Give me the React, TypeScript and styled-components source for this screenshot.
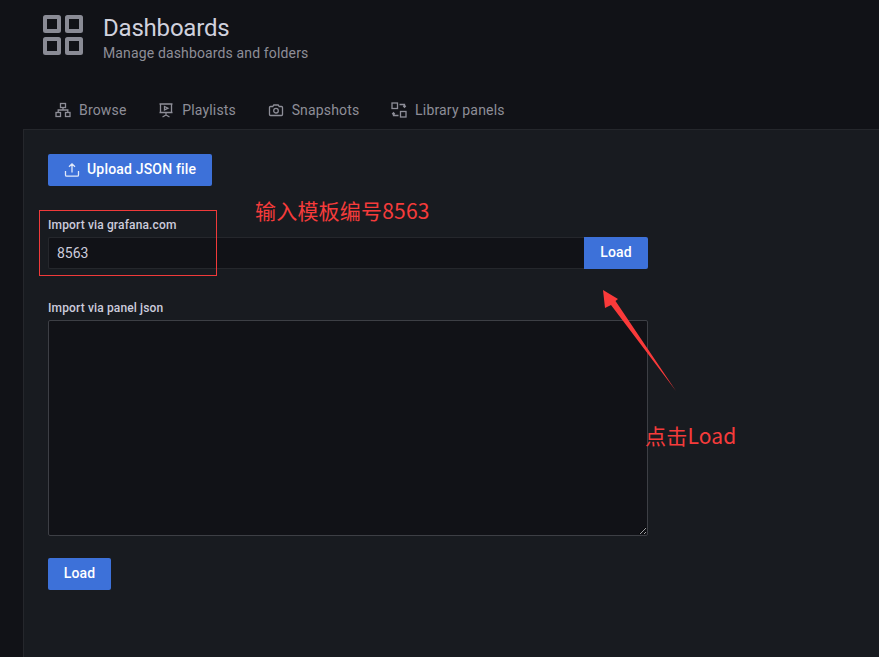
import React from "react";
import styled, { createGlobalStyle } from "styled-components";

const Global = createGlobalStyle`
  html, body { margin: 0; padding: 0; height: 100%; background: #111217; overflow: hidden; }
  #root { height: 100%; }
  * { box-sizing: border-box; }
`;

const Page = styled.div`
  position: relative;
  width: 879px;
  height: 657px;
  display: flex;
  flex-direction: column;
  background: #111217;
  font-family: Roboto, "Liberation Sans", sans-serif;
  color: #ccccdc;
  overflow: hidden;
`;
const Header = styled.header`
  height: 129px;
  padding: 14px 0 0 43px;
  display: flex;
  flex-direction: column;
  flex: none;
`;
const TitleRow = styled.div`
  display: flex;
  gap: 20px;
  height: 72px;
`;
const Logo = styled.svg`
  margin-top: 1px;
`;
const TitleText = styled.div`
  display: flex;
  flex-direction: column;
`;
const Title = styled.h1`
  margin: 0;
  font-size: 24px;
  line-height: 28px;
  font-weight: 400;
  letter-spacing: -0.2px;
  color: #d0d1dd;
`;
const Subtitle = styled.div`
  margin-top: 2px;
  font-size: 14px;
  line-height: 18px;
  letter-spacing: 0.14px;
  color: #8e8e98;
`;
const Tabs = styled.nav`
  display: flex;
  padding-left: 12px;
  gap: 31.7px;
  height: 20px;
  margin-top: 14px;
`;
const Tab = styled.div`
  display: flex;
  align-items: center;
  gap: 8px;
  font-size: 14px;
  letter-spacing: 0.17px;
  color: #8e8e98;
  line-height: 20px;
`;
const Panel = styled.main`
  flex: 1;
  margin-left: 23px;
  padding: 24px;
  background: #181b20;
  border-top: 1px solid #25272c;
  border-left: 1px solid #25272c;
`;
const Button = styled.button`
  height: 32px;
  padding: 0 16px 2px;
  display: inline-flex;
  align-items: center;
  justify-content: center;
  gap: 7px;
  background: #3d71d9;
  color: #fff;
  border: 0;
  border-radius: 2px;
  font-family: inherit;
  font-size: 14px;
  font-weight: 500;
  letter-spacing: 0.18px;
`;
const ButtonIcon = styled.svg`
  margin-top: 2px;
`;
const Label = styled.label`
  display: block;
  font-size: 12px;
  font-weight: 500;
  line-height: 14px;
  letter-spacing: 0.14px;
  color: #ccccdc;
  margin-bottom: 5px;
`;
const FieldRow = styled.div`
  display: flex;
  width: 600px;
  height: 32px;
`;
const Input = styled.input`
  flex: 1;
  min-width: 0;
  height: 32px;
  padding: 0 8px;
  background: #111217;
  border: 1px solid #25272c;
  border-right: 0;
  border-radius: 2px 0 0 2px;
  color: #ccccdc;
  font-family: inherit;
  font-size: 14px;
  outline: 0;
`;
const AttachedButton = styled(Button)`
  width: 64px;
  flex: none;
  padding: 0 0 2px;
  border-radius: 0 2px 2px 0;
`;
const SubmitButton = styled(Button)`
  width: 63px;
  padding: 0 0 2px;
`;
const Section = styled.section<{ $top: number }>`
  margin-top: ${(p) => p.$top}px;
`;
const Textarea = styled.textarea`
  display: block;
  width: 600px;
  height: 216px;
  padding: 4px 8px;
  background: #111217;
  border: 1px solid #3d3f45;
  border-radius: 2px;
  color: #ccccdc;
  outline: 0;
`;
const RedBox = styled.div`
  position: absolute;
  left: 39px;
  top: 210px;
  width: 178px;
  height: 66px;
  border: 1px solid #f03a3a;
`;
const Note = styled.div<{ $left: number; $top: number }>`
  position: absolute;
  left: ${(p) => p.$left}px;
  top: ${(p) => p.$top}px;
  color: #f53b3b;
  font-family: "Noto Sans CJK SC", "Noto Sans", sans-serif;
  font-size: 21px;
  line-height: 26px;
  letter-spacing: 0.2px;
  white-space: nowrap;
`;
const Arrow = styled.svg`
  position: absolute;
  left: 600px;
  top: 288px;
`;

const stroke = { fill: "none", stroke: "#8e8e98", strokeWidth: 1.3 };

export default function App() {
  return (
    <Page>
      <Global />
      <Header>
        <TitleRow>
          <Logo width="40" height="40" viewBox="0 0 40 40" fill="none" stroke="#8a8b95" strokeWidth="4">
            <rect x="2" y="2" width="14" height="14" rx="0.5" />
            <rect x="24" y="2" width="14" height="14" rx="0.5" />
            <rect x="2" y="24" width="14" height="14" rx="0.5" />
            <rect x="24" y="24" width="14" height="14" rx="0.5" />
          </Logo>
          <TitleText>
            <Title>Dashboards</Title>
            <Subtitle>Manage dashboards and folders</Subtitle>
          </TitleText>
        </TitleRow>
        <Tabs>
          <Tab>
            <svg width="16" height="16" viewBox="0 0 16 16" {...stroke}>
              <rect x="5.5" y="1.5" width="5" height="4" />
              <rect x="1" y="10.5" width="4.5" height="4" />
              <rect x="10.5" y="10.5" width="4.5" height="4" />
              <path d="M8 5.5V8M3.2 10.5V8h9.6v2.5" />
            </svg>
            Browse
          </Tab>
          <Tab>
            <svg width="16" height="16" viewBox="0 0 16 16" {...stroke}>
              <path d="M1.5 2h13M2.5 2v8.5h11V2M1.5 10.5h13M8 10.5V13M4.5 15L8 13l3.5 2" />
              <path d="M6.5 4.5v3.5L10 6.2z" />
            </svg>
            Playlists
          </Tab>
          <Tab>
            <svg width="16" height="16" viewBox="0 0 16 16" {...stroke}>
              <path d="M1.5 5.5a1 1 0 0 1 1-1h2.3l1-1.5h4.4l1 1.5h2.3a1 1 0 0 1 1 1v7a1 1 0 0 1-1 1h-11a1 1 0 0 1-1-1z" />
              <circle cx="8" cy="8.7" r="2.3" />
            </svg>
            Snapshots
          </Tab>
          <Tab>
            <svg width="16" height="16" viewBox="0 0 16 16" {...stroke}>
              <rect x="1" y="1" width="5.5" height="5.5" />
              <rect x="9.5" y="9.5" width="5.5" height="5.5" />
              <path d="M8.5 2.5h5V5M12.2 3.8l1.3 1.4 1.3-1.4M7.5 13.5h-5V11M1.2 12.2l1.3-1.4 1.3 1.4" />
            </svg>
            Library panels
          </Tab>
        </Tabs>
      </Header>
      <Panel>
        <Button>
          <ButtonIcon width="16" height="16" viewBox="0 0 16 16" fill="none" stroke="#fff" strokeWidth="1.3" opacity="0.85">
            <path d="M1.5 9v4a1.2 1.2 0 0 0 1.2 1.2h10.6a1.2 1.2 0 0 0 1.2-1.2V9M8 10.5V2M5 4.8L8 1.8l3 3" />
          </ButtonIcon>
          Upload JSON file
        </Button>
        <Section $top={32}>
          <Label>Import via grafana.com</Label>
          <FieldRow>
            <Input defaultValue="8563" />
            <AttachedButton>Load</AttachedButton>
          </FieldRow>
        </Section>
        <Section $top={32}>
          <Label>Import via panel json</Label>
          <Textarea />
        </Section>
        <Section $top={22}>
          <SubmitButton>Load</SubmitButton>
        </Section>
      </Panel>
      <RedBox />
      <Note $left={255} $top={197}>输入模板编号8563</Note>
      <Note $left={645} $top={422}>点击Load</Note>
      <Arrow width="80" height="110" viewBox="0 0 80 110">
        <path d="M3 2L18 11L15.5 13L76 103L11 17L5 20z" fill="#fa3a3a" />
      </Arrow>
    </Page>
  );
}
